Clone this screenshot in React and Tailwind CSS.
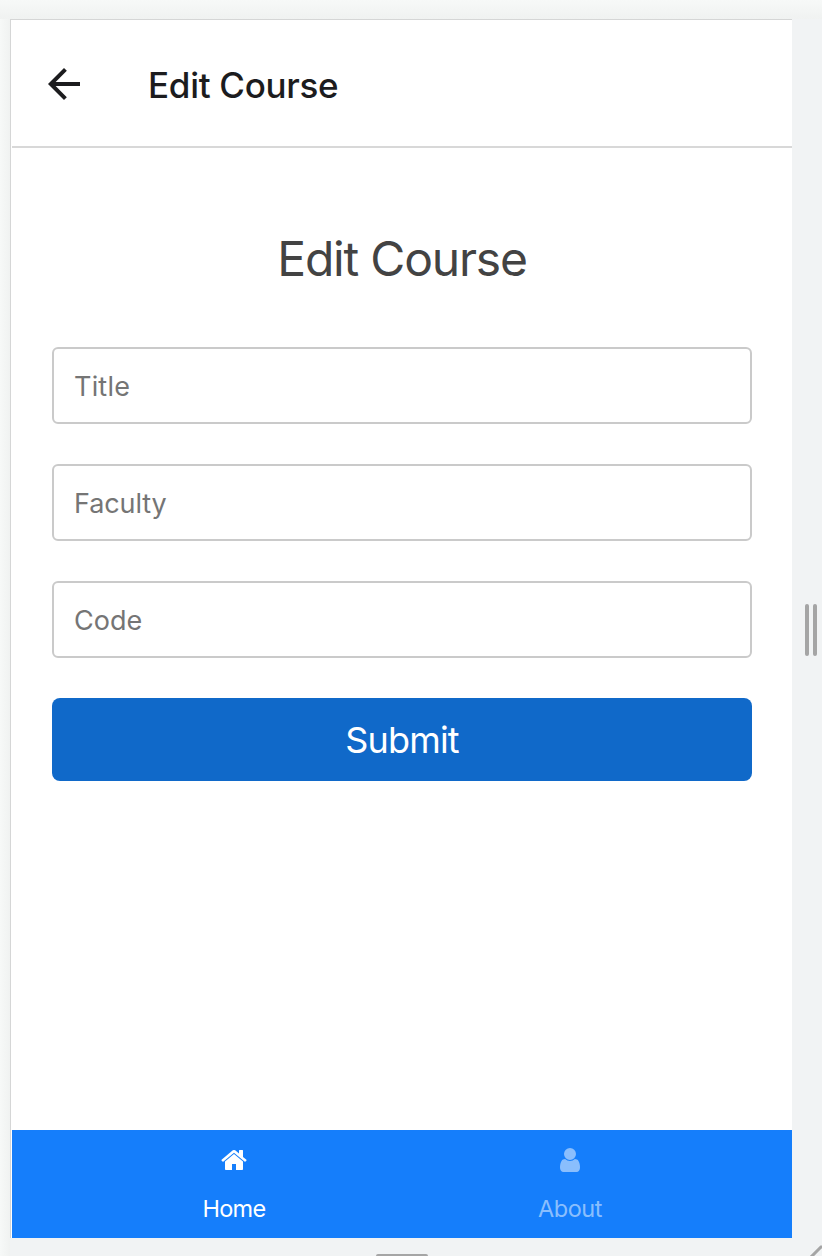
function ArrowLeft() {
  return (
    <svg viewBox="0 0 24 24" className="mt-0.5 size-12 shrink-0" fill="#1c1c1e">
      <path d="M20 11H7.83l5.59-5.59L12 4l-8 8 8 8 1.41-1.41L7.83 13H20v-2z" />
    </svg>
  );
}

function HomeIcon() {
  return (
    <svg viewBox="0 0 1792 1792" className="size-7" fill="currentColor">
      <path d="M1472 992v480q0 26-19 45t-45 19h-384v-384h-256v384h-384q-26 0-45-19t-19-45v-480q0-1 .5-3t.5-3l575-474 575 474q1 2 1 6zm223-69l-62 74q-8 9-21 11h-3q-13 0-21-7l-692-577-692 577q-12 8-24 7-13-2-21-11l-62-74q-8-10-7-23.5t11-21.5l719-599q32-26 76-26t76 26l244 204v-195q0-14 9-23t23-9h192q14 0 23 9t9 23v408l219 182q10 8 11 21.5t-7 23.5z" />
    </svg>
  );
}

function UserIcon() {
  return (
    <svg viewBox="0 0 1792 1792" className="size-7" fill="currentColor">
      <path d="M1536 1399q0 109-62.5 187t-150.5 78h-854q-88 0-150.5-78t-62.5-187q0-85 8.5-160.5t31.5-152 58.5-131 94-89 134.5-34.5q131 128 313 128t313-128q76 0 134.5 34.5t94 89 58.5 131 31.5 152 8.5 160.5zm-256-887q0 159-112.5 271.5t-271.5 112.5-271.5-112.5-112.5-271.5 112.5-271.5 271.5-112.5 271.5 112.5 112.5 271.5z" />
    </svg>
  );
}

function Field({ label, spacing }) {
  return (
    <input
      type="text"
      placeholder={label}
      className={`h-[77px] w-full rounded-md border-2 border-[#cacaca] bg-white px-5 pt-px text-[27px] placeholder:text-[#757575] placeholder:opacity-100 ${spacing}`}
    />
  );
}

export default function App() {
  return (
    <div className="flex h-[1256px] w-[822px] flex-col overflow-hidden bg-[#f1f3f4] font-['Inter',sans-serif]">
      <div className="h-[19px] shrink-0 bg-linear-to-b from-[#f7f9f8] to-[#f0f2f1]" />
      <div className="flex min-h-0 flex-1">
        <div className="w-2.5 shrink-0 bg-linear-to-r from-[#f7f9f8] to-[#f0f2f1]" />
        <div className="flex w-[782px] shrink-0 flex-col">
          <main className="flex h-[1219px] flex-col border-t border-l border-[#d5d6d6] bg-white pl-px">
            <header className="flex h-32 shrink-0 items-center border-b-2 border-[#d8d8d8] pl-7">
              <ArrowLeft />
              <span className="ml-[60px] pt-[5px] text-[35px] leading-none font-medium tracking-[-0.3px] whitespace-nowrap text-[#1c1c1e]">
                Edit Course
              </span>
            </header>
            <section className="flex flex-1 flex-col px-10">
              <h1 className="mt-[82px] h-[58px] text-center text-[48px] leading-[58px] tracking-[-1.2px] text-[#434343]">
                Edit Course
              </h1>
              <form className="mt-[59px] flex flex-col gap-10" onSubmit={(e) => e.preventDefault()}>
                <Field label="Title" spacing="tracking-[0.2px]" />
                <Field label="Faculty" spacing="tracking-[-0.1px]" />
                <Field label="Code" spacing="tracking-[0px]" />
                <button className="h-[83px] rounded-lg bg-[#1069c9] pt-px text-[36px] leading-none tracking-[-0.8px] text-white">
                  Submit
                </button>
              </form>
            </section>
            <nav className="flex h-27 shrink-0 justify-center gap-[272px] bg-[#157efb] pt-4">
              <a className="flex w-16 flex-col items-center text-white">
                <HomeIcon />
                <span className="mt-[17px] text-[23.5px] leading-9 tracking-[-0.7px]">Home</span>
              </a>
              <a className="flex w-16 flex-col items-center text-[#8abefd]">
                <UserIcon />
                <span className="mt-[17px] text-[23.5px] leading-9 tracking-[-0.5px]">About</span>
              </a>
            </nav>
          </main>
          <div className="flex h-[18px] items-end justify-center pl-0.5">
            <div className="h-0.5 w-[52px] rounded-t-sm bg-[#a5a5a5]" />
          </div>
        </div>
        <div className="flex flex-1 flex-col">
          <div className="flex flex-1 gap-1 pt-[585px] pl-[13px]">
            <div className="h-[52px] w-1 rounded-full bg-[#a5a5a5]" />
            <div className="h-[52px] w-1 rounded-full bg-[#a5a5a5]" />
          </div>
          <svg viewBox="0 0 16 12" className="h-3 w-4 self-end">
            <path d="M4 14L15 3H18" stroke="#a5a5a5" strokeWidth="3" fill="none" />
          </svg>
        </div>
      </div>
    </div>
  );
}
